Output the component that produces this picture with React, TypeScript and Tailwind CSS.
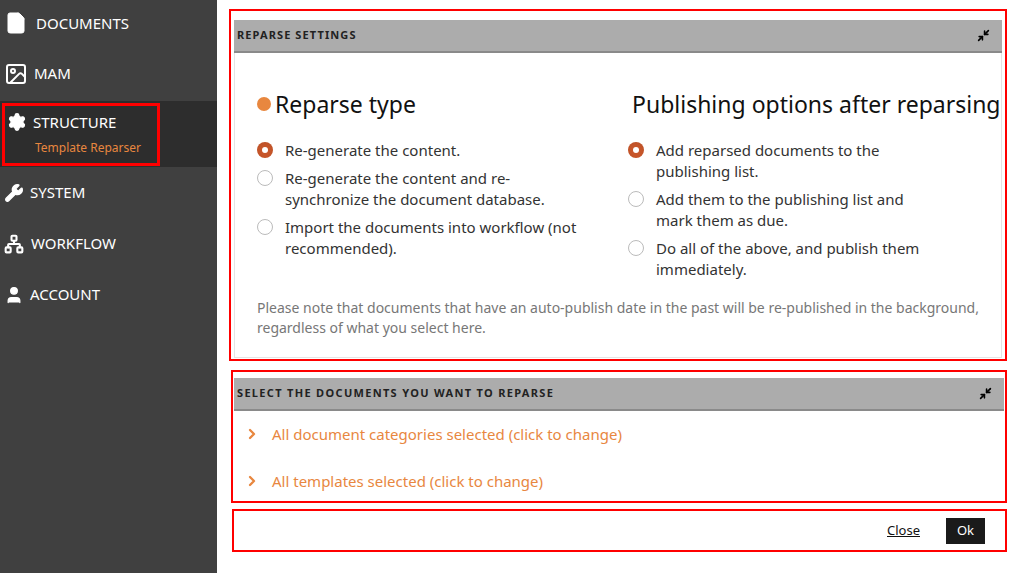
import { FileText, Image, Wrench, Network, User, Settings, ChevronRight, Minimize2 } from 'lucide-react'

const nav = [
  { icon: 'doc', label: 'DOCUMENTS' },
  { icon: 'img', label: 'MAM' },
]

function Radio({ on }: { on?: boolean }) {
  return on ? (
    <span className="mt-[2px] flex h-4 w-4 shrink-0 items-center justify-center rounded-full bg-[#c7562a] shadow-inner">
      <span className="h-[6px] w-[6px] rounded-full bg-white" />
    </span>
  ) : (
    <span className="mt-[2px] h-4 w-4 shrink-0 rounded-full border border-[#bbb] bg-white" />
  )
}

function Option({ on, text }: { on?: boolean; text: string }) {
  return (
    <div className="flex gap-3 text-[15px] leading-[21px] text-[#333]">
      <Radio on={on} />
      <span>{text}</span>
    </div>
  )
}

function PanelHead({ title, wide }: { title: string; wide?: boolean }) {
  return (
    <div className="flex h-[33px] items-center justify-between border-b-2 border-[#8a8a8a] bg-[#acacac] px-[3px] pr-[12px]">
      <span className={`text-[11px] font-bold text-[#222] ${wide ? 'tracking-[0.12em]' : 'tracking-[0.1em]'}`}>{title}</span>
      <Minimize2 className="h-[13px] w-[13px] text-black" strokeWidth={3} />
    </div>
  )
}

export default function App() {
  return (
    <div className="flex h-[573px] w-[1009px] bg-white font-['Liberation_Sans',Arial,sans-serif]">
      <aside className="w-[217px] shrink-0 bg-[#404040] text-white">
        <div className="flex h-[46px] items-center gap-[8px] pl-[4px] text-[15px]">
          <FileText className="h-6 w-6" fill="white" strokeWidth={1} />
          DOCUMENTS
        </div>
        <div className="flex h-[55px] items-center gap-[6px] pl-[4px] text-[15px]">
          <Image className="h-6 w-6" strokeWidth={2} />
          MAM
        </div>
        <div className="flex h-[66px] items-center bg-[#2d2d2d] pl-[2px]">
          <div className="flex h-[63px] w-[158px] flex-col justify-center border-[3px] border-[#ff0000] pl-[2px]">
            <div className="flex items-center gap-[6px] text-[15px]">
              <Settings className="h-5 w-5" fill="white" strokeWidth={1.5} />
              STRUCTURE
            </div>
            <div className="mt-[6px] pl-[28px] text-[12px] text-[#e8873f]">Template Reparser</div>
          </div>
        </div>
        <div className="flex h-[51px] items-center gap-[6px] pl-[4px] text-[15px]">
          <Wrench className="h-5 w-5" fill="white" strokeWidth={1.5} />
          SYSTEM
        </div>
        <div className="flex h-[51px] items-center gap-[7px] pl-[4px] text-[15px]">
          <Network className="h-5 w-5" strokeWidth={2.5} />
          WORKFLOW
        </div>
        <div className="flex h-[51px] items-center gap-[6px] pl-[4px] text-[15px]">
          <User className="h-5 w-5" fill="white" strokeWidth={1.5} />
          ACCOUNT
        </div>
      </aside>

      <main className="flex-1 pl-[12px] pr-[2px] pt-[9px]">
        <section className="h-[352px] border-2 border-[#ff0000] px-[3px] pt-[9px]">
          <PanelHead title="REPARSE SETTINGS" />
          <div className="h-[305px] border-x border-b border-[#e4e4e4] px-[22px] pt-[34px]">
            <div className="grid grid-cols-2 gap-[40px]">
              <div>
                <h2 className="mb-[18px] flex items-center gap-[4px] text-[23px] text-[#111]">
                  <span className="h-[14px] w-[14px] rounded-full bg-[#e8873f]" />Reparse type
                </h2>
                <div className="flex flex-col gap-[7px] pr-[10px]">
                  <Option on text="Re-generate the content." />
                  <Option text="Re-generate the content and re-synchronize the document database." />
                  <Option text="Import the documents into workflow (not recommended)." />
                </div>
              </div>
              <div className="-ml-[10px]">
                <h2 className="mb-[18px] flex items-center gap-[4px] whitespace-nowrap text-[23px] text-[#111]">
                  <span className="h-[14px] w-[14px] rounded-full bg-[#e8873f]" />Publishing options after reparsing
                </h2>
                <div className="flex w-[300px] flex-col gap-[7px]">
                  <Option on text="Add reparsed documents to the publishing list." />
                  <Option text="Add them to the publishing list and mark them as due." />
                  <Option text="Do all of the above, and publish them immediately." />
                </div>
              </div>
            </div>
            <p className="mt-[18px] text-[14px] leading-[20px] text-[#777]">
              Please note that documents that have an auto-publish date in the past will be re-published in the background, regardless of what you select here.
            </p>
          </div>
        </section>

        <section className="ml-[2px] mt-[9px] h-[133px] border-2 border-[#ff0000] px-[1px] pt-[6px]">
          <PanelHead title="SELECT THE DOCUMENTS YOU WANT TO REPARSE" wide />
          <div className="flex flex-col gap-[24px] px-[10px] pt-[12px] text-[15px] text-[#e8873f]">
            <div className="flex items-center gap-[12px]"><ChevronRight className="h-4 w-4" strokeWidth={3.5} />All document categories selected (click to change)</div>
            <div className="flex items-center gap-[12px]"><ChevronRight className="h-4 w-4" strokeWidth={3.5} />All templates selected (click to change)</div>
          </div>
        </section>

        <section className="ml-[3px] mt-[6px] flex h-[43px] items-center justify-end gap-[26px] border-2 border-[#ff0000] pr-[20px]">
          <span className="text-[13px] text-[#111] underline">Close</span>
          <span className="flex h-[26px] w-[39px] items-center justify-center bg-[#1a1a1a] text-[13px] text-white">Ok</span>
        </section>
      </main>
    </div>
  )
}
